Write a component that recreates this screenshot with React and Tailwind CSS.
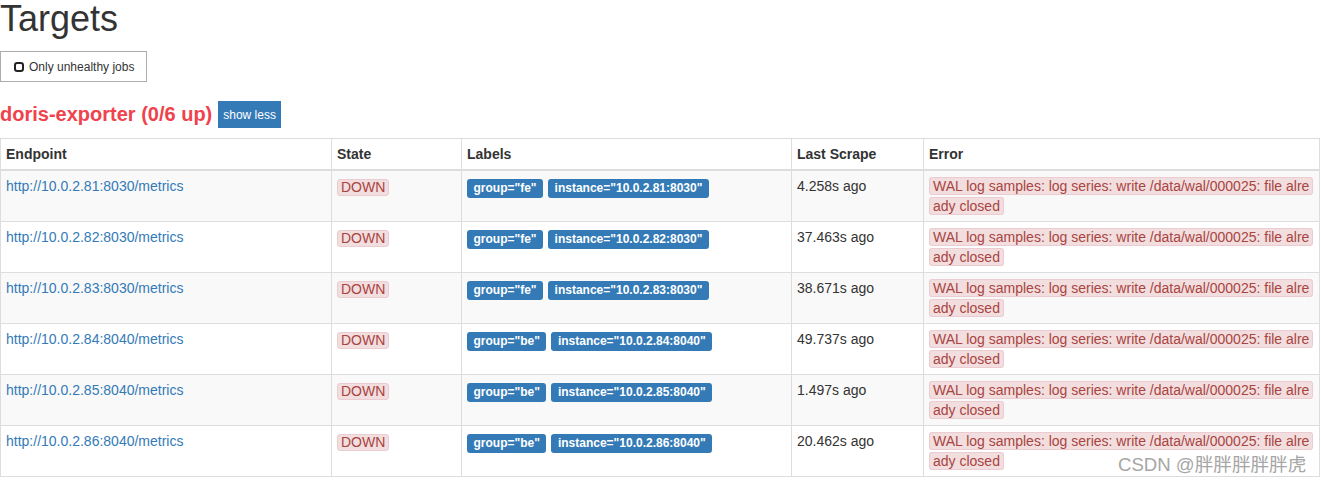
import React, {useState} from 'react';

const targets = [
  {host: '10.0.2.81', port: '8030', group: 'fe', ago: '4.258s ago'},
  {host: '10.0.2.82', port: '8030', group: 'fe', ago: '37.463s ago'},
  {host: '10.0.2.83', port: '8030', group: 'fe', ago: '38.671s ago'},
  {host: '10.0.2.84', port: '8040', group: 'be', ago: '49.737s ago'},
  {host: '10.0.2.85', port: '8040', group: 'be', ago: '1.497s ago'},
  {host: '10.0.2.86', port: '8040', group: 'be', ago: '20.462s ago'},
];

const errorText = 'WAL log samples: log series: write /data/wal/000025: file already closed';

const Label = ({children}) => (
    <span className="inline-block bg-[#337ab7] text-white text-[12px] font-bold leading-[12px] pt-[3px] pb-[4px] px-[6.5px] rounded-[3px] mr-[5px] whitespace-nowrap">
      {children}
    </span>
);

const App = () => {
  const [onlyUnhealthy, setOnlyUnhealthy] = useState(false);
  const [expanded, setExpanded] = useState(true);

  return (
      <div className="relative min-h-[483px] bg-white text-[#333] text-[14px] leading-[20px]"
           style={{fontFamily: '"Liberation Sans", Arial, sans-serif'}}>
        <h1 className="text-[36px] leading-[36px] font-medium mt-[1px]">Targets</h1>

        <button
            onClick={() => setOnlyUnhealthy(!onlyUnhealthy)}
            className="mt-[14px] w-[147px] h-[31px] flex items-center border border-[#adadad] bg-white pl-[13px] text-[12px] text-[#333]"
        >
          <svg width="10" height="10" viewBox="0 0 10 10" className="mr-[5px]">
            <rect x="1" y="1" width="8" height="8" rx="2.2" fill="none" stroke="#222" strokeWidth="2"/>
          </svg>
          Only unhealthy jobs
        </button>

        <div className="flex items-center mt-[19px] h-[27px]">
          <h2 className="text-[20px] font-bold text-[#f0424c] leading-[27px]">doris-exporter (0/6 up)</h2>
          <button
              onClick={() => setExpanded(!expanded)}
              className="ml-[6px] h-[27px] px-[5px] bg-[#337ab7] text-white text-[12px]"
          >
            {expanded ? 'show less' : 'show more'}
          </button>
        </div>

        {expanded && (
            <table className="mt-[10px] w-[1319px] table-fixed border-collapse border border-[#ddd]">
              <colgroup>
                <col className="w-[331px]"/>
                <col className="w-[130px]"/>
                <col className="w-[330px]"/>
                <col className="w-[132px]"/>
                <col className="w-[396px]"/>
              </colgroup>
              <thead>
              <tr className="border-b-2 border-[#ddd]">
                {['Endpoint', 'State', 'Labels', 'Last Scrape', 'Error'].map((h) => (
                    <th key={h} className="text-left font-bold p-[5px] border border-[#ddd] border-b-2 align-bottom">{h}</th>
                ))}
              </tr>
              </thead>
              <tbody>
              {targets.map((t, i) => (
                  <tr key={t.host} className={i % 2 === 0 ? 'bg-[#f9f9f9]' : 'bg-white'}>
                    <td className="p-[5px] border border-[#ddd] align-top">
                      <a href="#" className="text-[#337ab7]">http://{t.host}:{t.port}/metrics</a>
                    </td>
                    <td className="p-[5px] border border-[#ddd] align-top">
                      <span className="inline-block leading-[15px] px-[3px] bg-[#f2dede] text-[#a94442] border border-[#ebccd1] rounded-[3px] mt-[3px]">DOWN</span>
                    </td>
                    <td className="p-[5px] border border-[#ddd] align-top">
                      <div className="pt-[3px] flex">
                        <Label>group="{t.group}"</Label>
                        <Label>instance="{t.host}:{t.port}"</Label>
                      </div>
                    </td>
                    <td className="p-[5px] border border-[#ddd] align-top">{t.ago}</td>
                    <td className="p-[5px] border border-[#ddd] align-top">
                      <span className="break-all bg-[#f2dede] text-[#a94442] border border-[#ebccd1] rounded-[3px] px-[3px] [box-decoration-break:clone]">
                        {errorText}
                      </span>
                    </td>
                  </tr>
              ))}
              </tbody>
            </table>
        )}

        <div className="absolute left-[1118px] top-[452px] text-[18.6px] leading-[24px] text-[#a6a6a6]"
             style={{fontFamily: '"Liberation Sans", "Noto Sans CJK SC", sans-serif'}}>
          CSDN @胖胖胖胖胖虎
        </div>
      </div>
  );
};

export default App;
